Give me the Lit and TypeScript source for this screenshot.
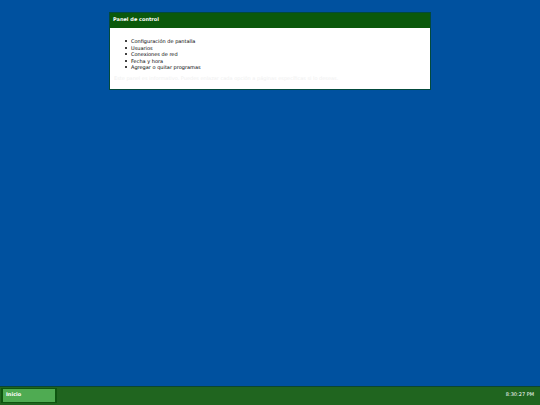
import { LitElement, html, css } from "lit";
import { customElement, property } from "lit/decorators.js";

@customElement("control-panel")
class ControlPanel extends LitElement {
  static styles = css`
    :host {
      display: block;
    }
    .window {
      background: #ffffff;
      border: 1px solid #034a3c;
      color: #000000;
    }
    .title {
      margin: 0;
      padding: 3px 3px 6px;
      background: #0b590b;
      color: #ffffff;
      font-size: 5px;
      line-height: 6px;
      font-weight: bold;
    }
    .content {
      padding: 10px 4px 8px;
      font-size: 5px;
      line-height: 6px;
    }
    .options {
      display: grid;
      align-content: space-between;
      min-height: 32px;
      margin: 0;
      padding: 0 0 0 11px;
      list-style: none;
    }
    .options li {
      display: flex;
      align-items: center;
      gap: 4px;
    }
    .options li::before {
      content: "";
      width: 2px;
      height: 2px;
      border-radius: 50%;
      background: #000000;
    }
    .note {
      margin: 5px 0 0;
      color: #f0f0f0;
    }
  `;

  @property({ attribute: false }) options: string[] = [];

  render() {
    return html`
      <section class="window" aria-labelledby="title">
        <h1 class="title" id="title">Panel de control</h1>
        <div class="content">
          <ul class="options">
            ${this.options.map((o) => html`<li>${o}</li>`)}
          </ul>
          <p class="note">
            Este panel es informativo. Puedes enlazar cada opción a páginas específicas si lo deseas.
          </p>
        </div>
      </section>
    `;
  }
}

@customElement("task-bar")
class TaskBar extends LitElement {
  static styles = css`
    :host {
      display: block;
    }
    .bar {
      display: flex;
      align-items: center;
      justify-content: space-between;
      padding: 1px 6px 2px 1px;
      border-top: 1px solid #0b4630;
      background: #20651f;
      color: #ffffff;
    }
    .start {
      width: 56px;
      padding: 2px 3px 5px;
      border: solid #0e5510;
      border-width: 1px 2px;
      background: #4fab52;
      color: #ffffff;
      font: bold 5px/6px "DejaVu Sans", sans-serif;
      text-align: left;
      cursor: pointer;
    }
    .clock {
      padding-bottom: 4px;
      font-size: 5px;
      line-height: 6px;
    }
  `;

  render() {
    return html`
      <footer class="bar">
        <button class="start" type="button">Inicio</button>
        <time class="clock" datetime="20:30:27">8:30:27 PM</time>
      </footer>
    `;
  }
}

@customElement("app-root")
class AppRoot extends LitElement {
  static styles = css`
    :host {
      display: flex;
      flex-direction: column;
      min-height: 100vh;
      background: #00519f;
      font-family: "DejaVu Sans", sans-serif;
    }
    .desktop {
      flex: 1;
      padding: 12px 109px;
    }
  `;

  private options = [
    "Configuración de pantalla",
    "Usuarios",
    "Conexiones de red",
    "Fecha y hora",
    "Agregar o quitar programas",
  ];

  render() {
    return html`
      <main class="desktop">
        <control-panel .options=${this.options}></control-panel>
      </main>
      <task-bar></task-bar>
    `;
  }
}
